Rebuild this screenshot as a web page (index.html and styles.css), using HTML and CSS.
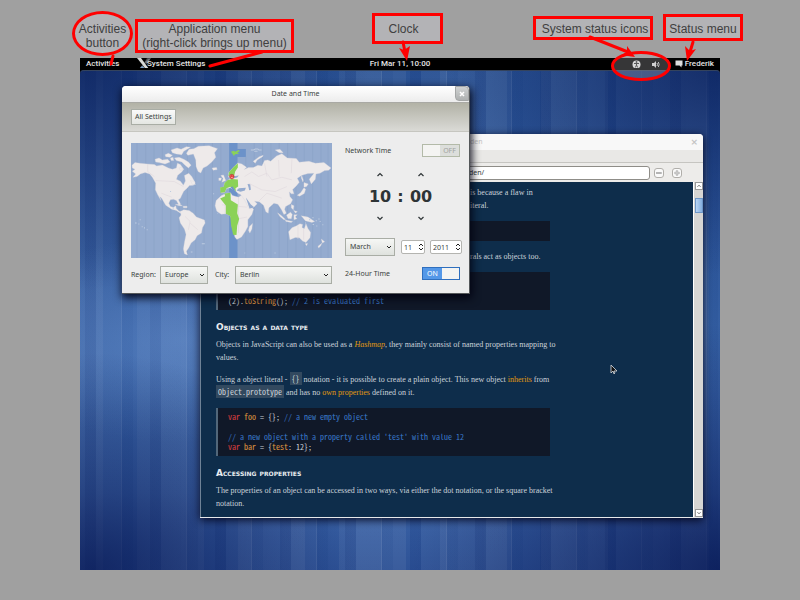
FILE: index.html
```html
<!DOCTYPE html>
<html lang="en">
<head>
<meta charset="utf-8">
<title>GNOME Shell desktop</title>
<link rel="stylesheet" href="styles.css">
</head>
<body>
<main class="figure">
  <section class="desktop">
    <header class="panel">
      <button class="panel-item activities">Activities</button>
      <button class="panel-item app-menu">
        <svg class="tools" viewBox="0 0 16 12" aria-hidden="true">
          <path d="M13 0 L9 5 L4 12 L1 12 L7 5 L10 0Z" fill="#3c3f43"/>
          <path d="M1 12 L5 8 L8 10 L6 12Z" fill="#7ba2cc"/>
          <path d="M0 0 L4 0 L12 11 L8 10Z" fill="#d8dad8"/>
          <path d="M11 1 L14 0 L10 6 L8 4Z" fill="#71757a"/>
        </svg>
        <span>System Settings</span>
      </button>
      <button class="panel-item clock">Fri Mar 11, 10:00</button>
      <div class="status">
        <svg class="access" viewBox="0 0 9 9" role="img" aria-label="Accessibility">
          <circle cx="4.500" cy="4.500" r="4" fill="#e8e8e8"/>
          <circle cx="4.500" cy="2" r="0.900" fill="#333"/>
          <path d="M2 3.500 H7 M4.500 3.500 V5 M4.500 5 L3.300 7.500 M4.500 5 L5.700 7.500" stroke="#333" stroke-width="1" fill="none"/>
        </svg>
        <svg class="volume" viewBox="0 0 9 9" role="img" aria-label="Volume">
          <path d="M0 3 H2 L4 1 V8 L2 6 H0Z" fill="#ddd"/>
          <path d="M5 3 Q6 4.500 5 6 M6.300 2 Q8 4.500 6.300 7" stroke="#ccc" stroke-width="1" fill="none"/>
        </svg>
        <button class="panel-item user">
          <svg class="chat" viewBox="0 0 8 8" aria-hidden="true"><path d="M0.500 0.500 H7.500 V5.500 H6.500 V7.500 L4.500 5.500 H0.500Z" fill="#ddd"/></svg>
          <span>Frederik</span>
        </button>
      </div>
    </header>

    <article class="window browser">
      <header class="browser-title"><span>den</span><button class="plain-close" aria-label="Close window">×</button></header>
      <div class="browser-tabs"></div>
      <div class="browser-tools">
        <input class="url" aria-label="Address" value="den/">
        <button class="tool" aria-label="Zoom out"><svg viewBox="0 0 10 10"><rect x="2" y="4" width="6" height="2" fill="#bbb" stroke="#999" stroke-width="0.500"/></svg></button>
        <button class="tool" aria-label="Zoom in"><svg viewBox="0 0 10 10"><path d="M4 2H6V4H8V6H6V8H4V6H2V4H4Z" fill="#ccc" stroke="#999" stroke-width="0.500"/></svg></button>
      </div>
      <div class="view">
        <div class="content">
          <p class="tail">is because a flaw in<br>iteral.</p>
          <pre> </pre>
          <p class="tail">rals act as objects too.</p>
          <pre class="workarounds">(2).<b>toString</b>(); <i>// 2 is evaluated first</i></pre>
          <h2>Objects as a data type</h2>
          <p>Objects in JavaScript can also be used as a <a href="#hashmap"><em>Hashmap</em></a>, they mainly consist of named properties mapping to<br>values.</p>
          <p>Using a object literal - <code>{}</code> notation - it is possible to create a plain object. This new object <a href="#inherits">inherits</a> from<br><code>Object.prototype</code> and has no <a href="#own">own properties</a> defined on it.</p>
          <pre><u>var</u> <b>foo</b> = {}; <i>// a new empty object</i>

<i>// a new object with a property called 'test' with value 12</i>
<u>var</u> <b>bar</b> = {<b>test</b>: 12};</pre>
          <h2>Accessing properties</h2>
          <p>The properties of an object can be accessed in two ways, via either the dot notation, or the square bracket<br>notation.</p>
        </div>
        <div class="scroll">
          <button aria-label="Scroll up"><svg viewBox="0 0 8 8"><path d="M2 5 L4 3 L6 5" fill="none" stroke="#333"/></svg></button>
          <div class="track"><div class="thumb"></div></div>
          <button aria-label="Scroll down"><svg viewBox="0 0 8 8"><path d="M2 3 L4 5 L6 3" fill="none" stroke="#333"/></svg></button>
        </div>
      </div>
    </article>

    <section class="window dialog">
      <header class="dialog-title"><span>Date and Time</span><button class="close" aria-label="Close"><svg viewBox="0 0 8 8"><path d="M2 2 L6 6 M6 2 L2 6" stroke="#fff" stroke-width="1.500"/></svg></button></header>
      <div class="dialog-tools"><button class="all">All Settings</button></div>
      <form class="dialog-body">
        <div class="place">
          <svg class="map" viewBox="48 189 602 346" preserveAspectRatio="none" role="img" aria-label="World time zones">
            <rect x="48" y="189" width="602" height="346" fill="#94abcf"/>
            <rect x="342" y="189" width="25" height="346" fill="#6c92c9"/>
            <rect x="366" y="207" width="26" height="24" fill="#6c92c9"/>
            <path d="M66 189V535M92 189V535M117 189V535M142 189V535M167 189V535M192 189V250M192 340V535M217 189V535M242 189V535M267 189V535M292 189V535M317 189V535M392 230V535M417 189V535M442 189V535M467 189V535M492 189V535M517 189V535M542 189V535M567 189V535M592 189V535M617 189V535M638 189V535" stroke="#889fc4" stroke-width="1.500" fill="none"/>
            <g fill="#eeeaea" stroke="#d8d4da" stroke-width="1">
              <path d="M51 256L60 248L74 250L96 252L118 254L125 258L142 255L160 264L172 268L184 264L187 250L196 254L206 268L200 276L188 286L184 298L196 304L205 316L211 303L208 287L221 280L230 290L240 308L235 316L223 317L216 325L206 334L200 346L196 355L190 360L196 372L192 376L184 362L175 358L166 360L161 370L166 380L175 383L182 378L184 387L192 394L200 396L196 400L184 392L170 388L152 376L140 355L134 350L138 362L128 345L121 330L122 310L112 292L104 282L90 278L76 282L66 290L54 292L62 282L52 274L60 268L52 264Z"/>
              <path d="M222 208L236 206L250 199L282 197L307 206L298 218L302 232L290 246L276 258L264 264L257 279L249 275L243 260L242 240L235 222L218 226L214 220Z"/>
              <path d="M120 238L132 234L142 240L158 238L165 246L150 252L132 248L122 246ZM150 224L160 220L172 226L165 232L152 230ZM168 210L186 204L198 208L214 200L226 202L206 214L200 224L184 222L172 218ZM178 234L192 232L206 238L220 246L228 256L220 264L210 256L200 246L184 242ZM166 234L174 232L176 242L168 242ZM192 264L200 262L204 270L196 272ZM226 302L238 305L241 314L232 314Z"/>
              <path d="M196 395L206 390L222 392L234 400L244 412L268 421L270 430L262 444L259 460L246 468L240 480L228 490L221 504L214 515L217 526L208 522L205 508L208 488L213 464L208 448L196 430L192 414L198 406Z"/>
              <path d="M181 374L194 373L202 378L192 378ZM204 379L216 379L216 384L205 384Z"/>
              <path d="M318 348L334 340L346 339L352 347L370 352L378 347L394 351L398 366L406 382L415 388L410 404L398 420L398 440L391 454L379 472L365 479L359 472L356 455L350 438L352 424L345 408L335 402L318 403L305 394L300 378L303 362Z"/>
              <path d="M340 292L340 279L354 263L368 249L380 252L394 262L387 269L400 263L414 263L428 256L440 258L448 242L458 240L466 244L484 228L500 221L516 234L543 236L552 247L581 244L600 250L626 248L647 264L640 271L628 272L614 280L602 282L600 298L588 312L582 298L596 280L578 281L560 286L546 295L552 307L543 318L532 329L536 342L528 342L522 336L524 350L532 360L526 372L511 380L508 388L513 400L506 404L498 388L488 373L476 370L461 384L459 400L452 396L445 376L432 366L418 364L426 372L410 388L401 386L388 360L376 344L368 340L360 332L346 324L334 326L329 337L318 339L316 324L326 322L328 309L340 300L346 293Z"/>
              <path d="M291 264L304 263L306 269L294 271ZM317 287L325 285L332 302L320 307L324 296ZM311 294L319 294L317 302L311 302ZM414 244L432 230L444 226L442 230L426 240L420 250ZM480 210L494 208L504 218L492 218Z"/>
              <path d="M520 456L530 444L544 438L554 432L562 434L560 443L567 447L572 432L578 446L586 458L584 474L572 488L562 484L552 474L540 473L524 480Z"/>
              <path d="M608 500L620 490L616 499L610 505ZM618 478L628 486L621 490ZM570 492L577 491L574 498ZM487 399L498 407L511 419L506 420L494 410ZM514 406L526 397L531 404L528 417L518 416ZM536 405L546 405L540 411L545 417L536 420ZM558 408L578 412L598 425L590 428L570 423ZM510 421L532 425L528 428L512 425ZM403 440L412 431L410 448L404 460L400 452ZM546 346L556 339L566 324L571 328L567 341L553 349ZM566 308L579 312L574 320L566 322ZM559 286L564 300L563 306L558 294ZM528 374L536 378L534 390L528 384ZM535 392L546 395L541 400Z"/>
            </g>
            <path d="M364 332L371 325L392 324L389 332L376 336ZM397 312L405 313L407 330L402 331L400 322ZM355 289L371 287L366 293L357 295ZM392 353L407 374L418 383L403 386Z" fill="#94abcf"/>
            <path d="M98 252L98 275L118 290M122 302L178 305L205 320M139 340L170 352M210 410L225 425L220 450M225 430L248 450M330 365V402M370 352V460M320 375L395 382M352 420L395 412M388 290L410 276L430 290L455 280L470 300L500 292L530 300M400 310L440 330L480 335L515 320M448 250L455 290M490 240L492 290M530 238L528 280M548 438V478M565 448V480M430 365L455 340L500 355" fill="none" stroke="#dcd5da" stroke-width="1.500"/>
            <g fill="#8bd257">
              <path d="M340 288L341 278L354 263L368 250L368 263L360 275L356 292L348 287Z"/>
              <path d="M315 323L326 321L328 309L338 300L350 297L368 299L369 320L361 325L362 335L354 325L345 321L334 325L329 337L316 339Z"/>
              <path d="M315 356L330 349L328 341L346 339L347 361L368 374L366 400L372 418L366 438L364 466L354 465L348 438L345 409L332 402L332 377Z"/>
              <path d="M347 215L356 212L360 215L370 210L374 213L366 218L372 221L360 223L356 228L352 221Z"/>
            </g>
            <path d="M346 322L352 320L360 331L356 333L350 326M342 325L346 326L345 332Z" fill="#6c92c9"/>
            <path d="M62 430h3m5 3h3m7 8h3m4 4h3m5 5h3m-38-20h2m12-10h3m10 24h3M260 492h9m-42 25h5M294 342h3m10 58h2M388 520h2m88 0h3m100-100h4m6-6h4m6 9h4m4-5h4m-44 12h3m20 4h4m7 5h3m7-14h3m5 10h3M407 210h8l5-3h8l3 3h8m-22 4h10M165 335h3m5 50h3" stroke="#bccae0" stroke-width="3" fill="none"/>
            <circle cx="350" cy="290" r="7" fill="#e23d3d" stroke="#9a2a2a"/>
            <path d="M346 288h2m4 0h2m-7 5h6" stroke="#ffd0d0" stroke-width="2"/>
          </svg>
          <div class="place-row">
            <label for="region">Region:</label>
            <span class="combo region"><select id="region"><option>Europe</option></select><svg viewBox="0 0 6 6"><path d="M1 2 L3 4 L5 2" fill="none" stroke="#222"/></svg></span>
            <label for="city">City:</label>
            <span class="combo city"><select id="city"><option>Berlin</option></select><svg viewBox="0 0 6 6"><path d="M1 2 L3 4 L5 2" fill="none" stroke="#222"/></svg></span>
          </div>
        </div>
        <div class="time">
          <div class="row"><label for="net">Network Time</label><button type="button" id="net" class="switch off" role="switch" aria-checked="false"><i></i><span>OFF</span></button></div>
          <div class="digits">
            <button type="button" aria-label="Hour up"><svg viewBox="0 0 8 8"><path d="M1.500 6 L4 3.500 L6.500 6" fill="none" stroke="#2e3436" stroke-width="1.200"/></svg></button>
            <span></span>
            <button type="button" aria-label="Minute up"><svg viewBox="0 0 8 8"><path d="M1.500 6 L4 3.500 L6.500 6" fill="none" stroke="#2e3436" stroke-width="1.200"/></svg></button>
            <output>10</output><output>:</output><output>00</output>
            <button type="button" aria-label="Hour down"><svg viewBox="0 0 8 8"><path d="M1.500 1 L4 3.500 L6.500 1" fill="none" stroke="#2e3436" stroke-width="1.200"/></svg></button>
            <span></span>
            <button type="button" aria-label="Minute down"><svg viewBox="0 0 8 8"><path d="M1.500 1 L4 3.500 L6.500 1" fill="none" stroke="#2e3436" stroke-width="1.200"/></svg></button>
          </div>
          <div class="date">
            <span class="combo month"><select aria-label="Month"><option>March</option></select><svg viewBox="0 0 6 6"><path d="M1 2 L3 4 L5 2" fill="none" stroke="#222"/></svg></span>
            <span class="spin day"><input aria-label="Day" value="11"><svg viewBox="0 0 6 10"><path d="M1 4 L3 2 L5 4 M1 6 L3 8 L5 6" fill="none" stroke="#222"/></svg></span>
            <span class="spin year"><input aria-label="Year" value="2011"><svg viewBox="0 0 6 10"><path d="M1 4 L3 2 L5 4 M1 6 L3 8 L5 6" fill="none" stroke="#222"/></svg></span>
          </div>
          <div class="row"><label for="h24">24-Hour Time</label><button type="button" id="h24" class="switch on" role="switch" aria-checked="true"><span>ON</span><i></i></button></div>
        </div>
      </form>
    </section>

    <svg class="pointer" viewBox="0 0 8 11" aria-hidden="true"><path d="M1 1 V9 L3 7 L4 10 L5 9 L4 7 H7Z" fill="#111" stroke="#c8ccd0" stroke-width="0.900"/></svg>
  </section>

  <div class="note note-activities">Activities<br>button</div>
  <div class="note note-app">Application menu<br>(right-click brings up menu)</div>
  <div class="note note-clock">Clock</div>
  <div class="note note-icons">System status icons</div>
  <div class="note note-status">Status menu</div>
  <svg class="arrows" viewBox="0 0 800 90" aria-hidden="true">
    <ellipse cx="641" cy="66" rx="28.500" ry="13.500" fill="#b3b3b6" fill-opacity="0.300" stroke="#f00" stroke-width="3"/>
    <g fill="none" stroke="#f00" stroke-width="3" stroke-linecap="round">
      <path d="M113 56 L111 64"/><path d="M262 52 L210 66"/>
      <path d="M403 42 L405 52"/><path d="M590 37 L628 52"/><path d="M693 42 L690 52"/>
    </g>
    <path d="M407 61 L399 48 L404 50 L410 46Z M635 57 L627 46 L627 52 L621 55Z M687 61 L685 46 L690 51 L696 49Z" fill="#f00"/>
  </svg>
</main>
</body>
</html>
```
FILE: styles.css
```css
* { box-sizing: border-box; }
body {
  margin: 0;
  background: #a0a0a0;
  font: 7px/10px "Noto Sans", "Open Sans", sans-serif;
  color: #3a3f40;
}
button, input, select {
  margin: 0;
  padding: 0;
  border: 0;
  background: none;
  font: inherit;
  color: inherit;
  appearance: none;
}
svg { display: block; }

.figure {
  position: relative;
  display: flex;
  min-height: 100vh;
  padding: 58px 80px 30px;
}
.desktop {
  position: relative;
  flex: 1;
  overflow: hidden;
  background:
    radial-gradient(ellipse at 0 0, rgba(9, 30, 90, .8), transparent 32%),
    radial-gradient(ellipse at 100% 0, rgba(9, 30, 90, .8), transparent 30%),
    radial-gradient(ellipse at 2% 100%, rgba(6, 22, 82, .75), transparent 30%),
    radial-gradient(ellipse at 100% 100%, rgba(6, 22, 82, .8), transparent 34%),
    radial-gradient(ellipse at 16% 55%, rgba(120, 160, 220, .4), transparent 26%),
    repeating-linear-gradient(90deg, transparent 0 5px, rgba(10, 40, 110, .16) 5px 16px, rgba(255, 255, 255, .03) 16px 41px, rgba(255, 255, 255, .1) 41px 42px, rgba(20, 60, 130, .12) 42px 53px, transparent 53px 65px),
    repeating-linear-gradient(90deg, rgba(255, 255, 255, .06) 0 23px, transparent 23px 57px, rgba(255, 255, 255, .05) 57px 101px),
    linear-gradient(#2a5294, #30599c 40%, #3a65a8 65%, #3c66aa 85%, #2e5296);
}

.panel {
  position: relative;
  display: grid;
  grid-template-columns: 57px 1fr auto 1fr;
  align-items: center;
  height: 12px;
  padding: 0 6px;
  background: #000;
  color: #e4e4e4;
  font: 500 8px/12px "Roboto", sans-serif;
}
.panel::after {
  content: "";
  position: absolute;
  inset: 12px 0 auto;
  height: 6px;
  border-top: 1px solid #34435c;
  border-radius: 4px 4px 0 0;
  box-shadow: 0 0 0 2px #000;
  clip-path: inset(-2px 0 0);
}
.activities { justify-self: start; }
.app-menu { display: flex; align-items: center; justify-self: start; margin-left: -6px; }
.tools { width: 16px; height: 12px; margin-right: -6px; }
.clock { margin-left: -57px; }
.status { display: flex; align-items: center; justify-content: flex-end; }
.access { width: 9px; height: 9px; margin-right: 11px; }
.volume { width: 9px; height: 9px; margin-right: 14px; }
.user { display: flex; align-items: center; gap: 2px; }
.chat { width: 8px; height: 8px; }

.window { position: absolute; border-radius: 4px 4px 0 0; }

.browser {
  left: 120px;
  top: 76px;
  width: 503px;
  overflow: hidden;
  background: #edecea;
  box-shadow: 0 2px 8px rgba(0, 0, 20, .9);
}
.browser-title {
  display: flex;
  align-items: center;
  justify-content: space-between;
  height: 16px;
  padding: 0 5px 0 270px;
  background: #f8f8f8;
  color: #c4c4c4;
}
.plain-close { font: 700 9px/10px "DejaVu Sans", sans-serif; }
.browser-tabs { height: 13px; background: #e9e8e6; border-bottom: 1px solid #c6c5c1; }
.browser-tools { display: flex; align-items: center; gap: 8px; height: 19px; padding: 0 21px 0 100px; }
.url {
  flex: 1;
  min-width: 0;
  height: 14px;
  margin-right: -4px;
  padding-left: 168px;
  border: 1px solid #8f8d88;
  border-radius: 3px;
  background: #fff;
}
.tool { width: 10px; height: 10px; border: 1px solid #b0aeaa; border-radius: 3px; background: #fafafa; }
.view {
  display: flex;
  height: 336px;
  border: solid #e6e8ea;
  border-width: 0 0 1px 0;
  background: #0e2d4b;
}
.content {
  flex: 1;
  min-width: 0;
  padding: 4px 143px 0 15px;
  border-left: 1px solid #6f8296;
  color: #cbd3da;
  font: 8px/13px "Liberation Serif", serif;
  white-space: nowrap;
}
.content p { margin: 0 0 9px; }
.content .tail { padding-left: 254px; }
.content a { color: #e09a10; text-decoration: none; }
.content code, .content pre { font-family: "Noto Sans Mono CJK SC", "Liberation Mono", monospace; }
.content code { padding: 1px 2px; background: #32495f; font-size: 8px; line-height: 9px; }
.content pre {
  margin: 0 0 9px;
  min-height: 20px;
  padding: 4px 10px;
  border-left: 2px solid #52677a;
  background: #101828;
  color: #c8d0d8;
  font-size: 8px;
  line-height: 10px;
}
.content .workarounds { padding-top: 24px; }
.content pre i { color: #3a78c8; font-style: normal; }
.content pre b { color: #e09a40; font-weight: 400; }
.content pre u { color: #e04040; text-decoration: none; }
.content h2 {
  margin: 11px 0 4px;
  color: #e8ecf0;
  font: 700 9px/13px "DejaVu Sans", sans-serif;
  font-variant: small-caps;
}
.scroll {
  flex: none;
  display: flex;
  flex-direction: column;
  width: 10px;
  padding-left: 1px;
  border-left: 1px solid #fff;
  background: #d6d5d3;
}
.scroll button { height: 8px; border: 1px solid #999; background: #fff; }
.scroll svg { width: 6px; height: 6px; }
.track { flex: 1; padding-top: 8px; }
.thumb { height: 15px; border: 1px solid #6d96c8; background: linear-gradient(90deg, #b8d4f4, #84aede); }

.dialog {
  left: 42px;
  top: 28px;
  width: 348px;
  border: solid #55585a;
  border-width: 0 1px 1px 0;
  background: #ededed;
  box-shadow: 1px 3px 9px 1px rgba(0, 0, 15, .9);
}
.dialog-title {
  display: grid;
  place-items: center;
  height: 17px;
  border-bottom: 1px solid #a9a9a4;
  border-radius: 4px 4px 0 0;
  background: linear-gradient(#fff, #ececec);
}
.dialog-title > * { grid-area: 1 / 1; }
.close {
  place-self: start end;
  display: grid;
  place-items: center;
  width: 14px;
  height: 15px;
  border: 1px solid #a4a6a6;
  border-radius: 0 4px 0 4px;
  background: linear-gradient(#d0d2d2, #aeb1b1);
}
.close svg { width: 8px; height: 8px; }
.dialog-tools {
  height: 29px;
  padding: 6px 9px;
  border-bottom: 1px solid #c6c6c0;
  background: linear-gradient(#b2b2a6, #dadad6);
}
.all {
  display: block;
  height: 16px;
  padding: 0 3px;
  border: 1px solid #a9ada5;
  background: linear-gradient(#fafafa, #e4e6e2);
}
.dialog-body { display: flex; gap: 13px; padding: 11px 8px 9px 9px; }
.place { flex: 0 0 201px; }
.map { width: 100%; height: 115px; }
.place-row { display: flex; align-items: center; margin-top: 8px; }
.place-row label { width: 29px; }
.place-row label + .combo { flex: none; }
.place-row .region { width: 48px; margin-right: 7px; }
.place-row .region + label { width: 20px; }
.place-row .city { width: 97px; }
.combo, .spin { position: relative; display: block; }
.combo select {
  display: block;
  width: 100%;
  height: 18px;
  padding-left: 4px;
  border: 1px solid #a9ada5;
  background: linear-gradient(#f6f7f5, #dfe2de);
}
.combo svg { position: absolute; right: 3px; top: 6px; width: 6px; height: 6px; pointer-events: none; }
.time { flex: 1; }
.row { display: flex; align-items: center; justify-content: space-between; height: 15px; padding-right: 2px; }
.switch {
  display: flex;
  align-items: center;
  width: 38px;
  height: 13px;
  border: 1px solid #b3baa8;
  background: #dcdedb;
  color: #a0a2a0;
}
.switch i { width: 17px; height: 11px; background: #f4f4f2; }
.switch span { flex: 1; text-align: center; }
.switch.on { border-color: #2f6fbe; background: #5498e8; color: #fff; }
.digits {
  display: grid;
  grid-template-columns: 22px 19px 22px;
  justify-items: center;
  margin: 12px 0 14px 24px;
}
.digits button svg { width: 8px; height: 8px; }
.digits output { color: #2e3436; font: 700 16px/38px "DejaVu Sans", sans-serif; }
.date { display: flex; align-items: center; margin-bottom: 10px; }
.month { width: 50px; margin-right: 6px; }
.spin input {
  display: block;
  width: 100%;
  height: 14px;
  padding-left: 2px;
  border: 1px solid #b4b4b0;
  border-radius: 2px;
  background: #fff;
}
.spin svg { position: absolute; right: 1px; top: 2px; width: 6px; height: 10px; }
.day { width: 24px; margin-right: 5px; }
.year { width: 32px; }

.pointer { position: absolute; left: 530px; top: 306px; width: 8px; height: 11px; }

.note {
  position: absolute;
  border: 3px solid #f00;
  background: #b3b3b6;
  color: #404040;
  font: 12px/14px "Liberation Sans", sans-serif;
  text-align: center;
  white-space: nowrap;
}
.note-activities {
  left: 72px;
  top: 11px;
  display: flex;
  justify-content: center;
  width: 61px;
  height: 45px;
  padding-top: 8px;
  border-radius: 50%;
}
.note-app { left: 135px; top: 19px; width: 159px; }
.note-clock { left: 372px; top: 13px; width: 71px; height: 31px; padding: 6px 8px 0 0; }
.note-icons { left: 533px; top: 16px; width: 120px; height: 24px; padding: 3px 0 0 4px; }
.note-status { left: 663px; top: 14px; width: 80px; height: 27px; padding-top: 5px; }
.arrows { position: absolute; left: 0; top: 0; width: 100%; pointer-events: none; }
```
